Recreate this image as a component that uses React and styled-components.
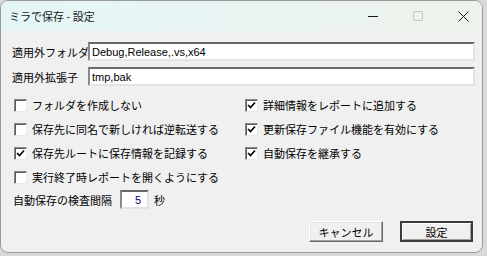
import React, { useState } from "react";
import styled, { createGlobalStyle } from "styled-components";

const GlobalStyle = createGlobalStyle`
  html, body {
    margin: 0;
    padding: 0;
    background: #d9d9d9;
  }
  body {
    width: 487px;
    height: 256px;
    overflow: hidden;
  }
`;

const Window = styled.div`
  width: 481px;
  height: 251px;
  border: 1px solid #9a9a9a;
  border-radius: 8px;
  overflow: hidden;
  background: #f0f0f0;
  display: flex;
  flex-direction: column;
  font-family: "Liberation Sans", "Noto Sans CJK JP", sans-serif;
  font-size: 11px;
  color: #000;
`;

const TitleBar = styled.div`
  height: 30px;
  flex-shrink: 0;
  display: flex;
  align-items: center;
  gap: 15px;
  padding-right: 4px;
  background: linear-gradient(90deg, #e5f6f7 0%, #eaf4f2 60%, #eef3ea 100%);
`;

const Title = styled.span`
  flex: 1;
  padding-left: 8px;
  font-family: "Noto Sans CJK JP", sans-serif;
  font-size: 11px;
  color: #1a1a1a;
`;

const Caption = styled.div`
  width: 30px;
  height: 30px;
  display: flex;
  align-items: center;
  justify-content: center;
  color: ${(p) => (p.$disabled ? "#c4c4c4" : "#1a1a1a")};
`;

const Content = styled.div`
  flex: 1;
  display: flex;
  flex-direction: column;
  padding: 11px 7px 0 11px;
`;

const FieldRow = styled.div`
  display: flex;
  align-items: center;
  margin-bottom: 6px;
`;

const Label = styled.span`
  width: 76px;
  flex-shrink: 0;
  white-space: nowrap;
`;

const TextBox = styled.input`
  box-sizing: border-box;
  flex: ${(p) => (p.$width ? "none" : "1")};
  width: ${(p) => (p.$width ? `${p.$width}px` : "auto")};
  height: 19px;
  margin: 0;
  padding: 0 ${(p) => (p.$right ? "6px" : "2px")} 0 2px;
  border-style: solid;
  border-width: 2px;
  border-color: #696969 #e3e3e3 #e3e3e3 #8a8a8a;
  box-shadow: inset 1px 0 0 #fff;
  background: #fff;
  font-family: "Liberation Sans", "Noto Sans CJK JP", sans-serif;
  font-size: 11px;
  color: ${(p) => (p.$right ? "#000080" : "#000")};
  text-align: ${(p) => (p.$right ? "right" : "left")};
  outline: none;
`;

const CheckGrid = styled.div`
  display: grid;
  grid-template-columns: 231px 1fr;
  grid-auto-rows: 24px;
  margin-top: 1px;
  padding-left: 2px;
`;

const CheckItem = styled.label`
  display: flex;
  align-items: center;
  gap: 5px;
  white-space: nowrap;
  grid-column: ${(p) => p.$col};
  grid-row: ${(p) => p.$row};
`;

const Box = styled.span`
  box-sizing: border-box;
  width: 13px;
  height: 13px;
  flex-shrink: 0;
  border-style: solid;
  border-width: 1px;
  border-color: #8a8a8a #e8e8e8 #e8e8e8 #8a8a8a;
  box-shadow: inset 1px 1px 0 #5a5a5a;
  background: #fff;
  display: flex;
  align-items: center;
  justify-content: center;
`;

const IntervalRow = styled.div`
  display: flex;
  align-items: center;
  height: 19px;
  margin-top: 1px;
  padding-left: 1px;
  gap: 8px;
`;

const Unit = styled.span`
  margin-left: -3px;
`;

const ButtonRow = styled.div`
  display: flex;
  justify-content: flex-end;
  gap: 17px;
  margin-top: 12px;
  padding-right: 2px;
`;

const Button = styled.button`
  box-sizing: border-box;
  width: ${(p) => p.$w}px;
  height: 21px;
  margin: 0;
  padding: 0;
  background: #f0f0f0;
  border-style: solid;
  border-width: ${(p) => (p.$default ? "2px" : "1px")};
  border-color: ${(p) =>
    p.$default ? "#3c3c3c #3c3c3c #3c3c3c #3c3c3c" : "#ffffff #696969 #696969 #ffffff"};
  box-shadow: ${(p) =>
    p.$default
      ? "inset 1px 1px 0 #fff, inset -1px -1px 0 #a0a0a0"
      : "inset -1px -1px 0 #a0a0a0, inset 1px 1px 0 #e3e3e3"};
  font-family: "Noto Sans CJK JP", sans-serif;
  font-size: 11px;
  color: #000;
`;

function Check({ checked, children, col, row }) {
  return (
    <CheckItem $col={col} $row={row}>
      <Box>
        {checked && (
          <svg width="9" height="9" viewBox="0 0 9 9">
            <path d="M1 4 L3.5 6.5 L8 1.5" stroke="#000" strokeWidth="1.7" fill="none" />
          </svg>
        )}
      </Box>
      <span>{children}</span>
    </CheckItem>
  );
}

const options = [
  { text: "フォルダを作成しない", checked: false, col: 1, row: 1 },
  { text: "保存先に同名で新しければ逆転送する", checked: false, col: 1, row: 2 },
  { text: "保存先ルートに保存情報を記録する", checked: true, col: 1, row: 3 },
  { text: "実行終了時レポートを開くようにする", checked: false, col: 1, row: 4 },
  { text: "詳細情報をレポートに追加する", checked: true, col: 2, row: 1 },
  { text: "更新保存ファイル機能を有効にする", checked: true, col: 2, row: 2 },
  { text: "自動保存を継承する", checked: true, col: 2, row: 3 },
];

export default function App() {
  const [folders, setFolders] = useState("Debug,Release,.vs,x64");
  const [exts, setExts] = useState("tmp,bak");
  const [interval, setInterval] = useState("5");

  return (
    <>
      <GlobalStyle />
      <Window>
        <TitleBar>
          <Title>ミラで保存 - 設定</Title>
          <Caption>
            <svg width="10" height="10" viewBox="0 0 10 10">
              <path d="M0 5.5 H10" stroke="currentColor" strokeWidth="1" />
            </svg>
          </Caption>
          <Caption $disabled>
            <svg width="10" height="10" viewBox="0 0 10 10">
              <rect x="0.5" y="0.5" width="9" height="9" rx="1" stroke="currentColor" fill="none" />
            </svg>
          </Caption>
          <Caption>
            <svg width="11" height="11" viewBox="0 0 11 11">
              <path d="M0.5 0.5 L10.5 10.5 M10.5 0.5 L0.5 10.5" stroke="currentColor" strokeWidth="1" />
            </svg>
          </Caption>
        </TitleBar>
        <Content>
          <FieldRow>
            <Label>適用外フォルダ</Label>
            <TextBox value={folders} onChange={(e) => setFolders(e.target.value)} />
          </FieldRow>
          <FieldRow>
            <Label>適用外拡張子</Label>
            <TextBox value={exts} onChange={(e) => setExts(e.target.value)} />
          </FieldRow>
          <CheckGrid>
            {options.map((o) => (
              <Check key={o.text} checked={o.checked} col={o.col} row={o.row}>
                {o.text}
              </Check>
            ))}
          </CheckGrid>
          <IntervalRow>
            <span>自動保存の検査間隔</span>
            <TextBox $width={29} $right value={interval} onChange={(e) => setInterval(e.target.value)} />
            <Unit>秒</Unit>
          </IntervalRow>
          <ButtonRow>
            <Button $w={74}>キャンセル</Button>
            <Button $w={73} $default>設定</Button>
          </ButtonRow>
        </Content>
      </Window>
    </>
  );
}
